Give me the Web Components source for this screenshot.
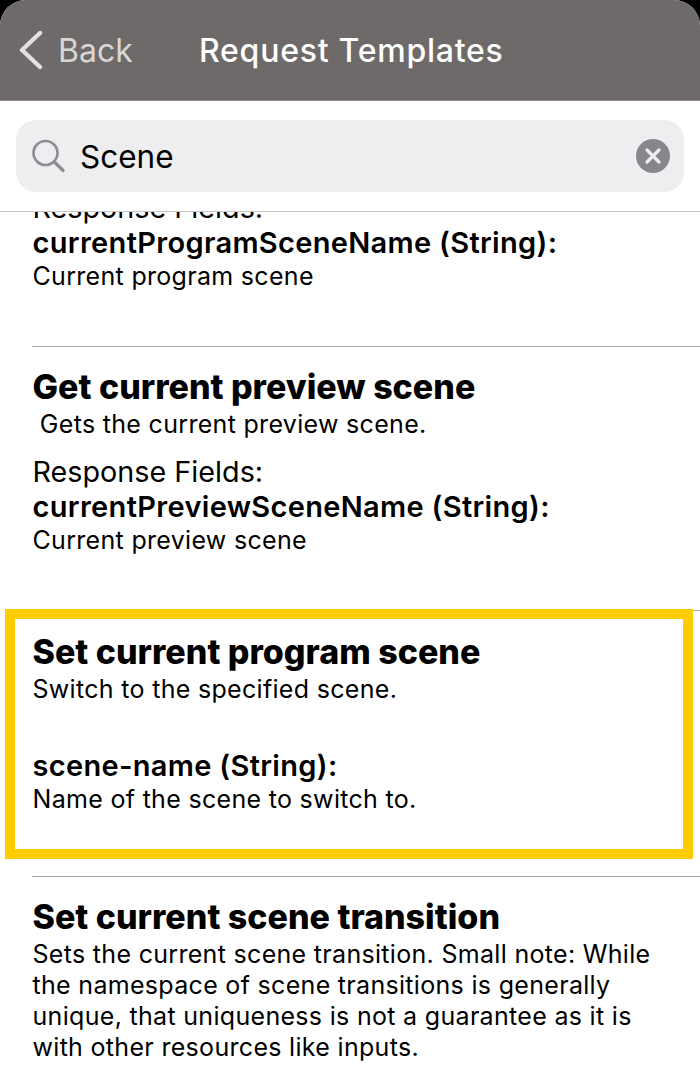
<!DOCTYPE html>
<html>
<head>
<meta charset="utf-8">
<title>Request Templates</title>
<style>
  html, body { margin: 0; padding: 0; background: #000; }
  body { width: 700px; height: 1079px; overflow: hidden; font-family: Inter, "Liberation Sans", sans-serif; }
</style>
</head>
<body>
<nav-screen>
  <nav-bar slot="bar" title="Request Templates" back="Back"></nav-bar>
  <search-field slot="search" value="Scene"></search-field>
</nav-screen>

<script>
class NavScreen extends HTMLElement {
  constructor() {
    super();
    const shadowRoot = this.attachShadow({mode: 'open'});
    shadowRoot.innerHTML = `
      <style>
        :host { display: flex; flex-direction: column; width: 700px; height: 1079px; background: #fff; border-radius: 26px 26px 0 0; overflow: hidden; position: relative; }
        #list { flex: 1 1 auto; overflow: hidden; border-top: 1px solid #c8c8cb; }
        #scroll { margin-top: -22px; }
      </style>
      <slot name="bar"></slot>
      <slot name="search"></slot>
      <div id="list"><div id="scroll"><slot></slot></div></div>
    `;
  }
}

class NavBar extends HTMLElement {
  constructor() {
    super();
    const shadowRoot = this.attachShadow({mode: 'open'});
    shadowRoot.innerHTML = `
      <style>
        :host { display: flex; align-items: center; height: 101px; box-sizing: border-box; background: #6e6a69; border-bottom: 1px solid #8e8b8a; flex: 0 0 auto; }
        svg { display: block; margin-left: 18px; flex: 0 0 auto; }
        #back { margin-left: 14px; width: 141px; font-size: 32px; color: #d9d7d5; }
        #title { font-size: 32px; font-weight: 500; color: #fff; letter-spacing: 0.75px; }
      </style>
      <svg width="26" height="40" viewBox="0 0 26 40"><path d="M22 3 L4 20 L22 37" fill="none" stroke="#e3e1df" stroke-width="4.4" stroke-linecap="round" stroke-linejoin="round"/></svg>
      <span id="back"></span>
      <span id="title"></span>
    `;
    shadowRoot.querySelector('#back').textContent = this.getAttribute('back');
    shadowRoot.querySelector('#title').textContent = this.getAttribute('title');
  }
}

class SearchField extends HTMLElement {
  constructor() {
    super();
    const shadowRoot = this.attachShadow({mode: 'open'});
    shadowRoot.innerHTML = `
      <style>
        :host { display: block; padding: 19px 16px 19px; background: #fff; flex: 0 0 auto; }
        #box { display: flex; align-items: center; height: 72px; background: #eeeef0; border-radius: 20px; padding: 0 14px 0 15px; }
        #value { flex: 1 1 auto; margin-left: 15px; font-size: 31.5px; color: #000; }
      </style>
      <div id="box">
        <svg width="34" height="34" viewBox="0 0 34 34"><circle cx="14.5" cy="14" r="12" fill="none" stroke="#8e8e92" stroke-width="2.6"/><path d="M23.5 23 L32 31.5" stroke="#8e8e92" stroke-width="3.2" stroke-linecap="round"/></svg>
        <span id="value"></span>
        <svg width="34" height="34" viewBox="0 0 34 34"><circle cx="17" cy="17" r="17" fill="#86868c"/><path d="M11 11 L23 23 M23 11 L11 23" stroke="#eeeef0" stroke-width="3.2" stroke-linecap="round"/></svg>
      </div>
    `;
    shadowRoot.querySelector('#value').textContent = this.getAttribute('value');
  }
}

class TemplateRow extends HTMLElement {
  constructor() {
    super();
    const shadowRoot = this.attachShadow({mode: 'open'});
    shadowRoot.innerHTML = `
      <style>
        :host { display: block; margin-left: 32px; border-bottom: 1px solid #a9a9ad; color: #000; height: var(--row-height, auto); box-sizing: border-box; }
        :host([plain]) { border-bottom: none; }
      </style>
      <slot></slot>
    `;
  }
}

class RowText extends HTMLElement {
  constructor() {
    super();
    const shadowRoot = this.attachShadow({mode: 'open'});
    shadowRoot.innerHTML = `
      <style>
        :host { display: block; margin-left: 0.5px; }
        div { white-space: pre; }
        :host([kind="title"]) { font-size: 34px; font-weight: 800; line-height: 40px; margin-bottom: 2px; letter-spacing: 0; }
        :host([kind="field"]) { font-size: 29px; font-weight: 600; line-height: 36px; letter-spacing: 0.32px; }
        :host([kind="label"]) { font-size: 28.75px; line-height: 35px; }
        :host([kind="body"]) { font-size: 25px; line-height: 31px; letter-spacing: 0.31px; }
      </style>
      <div><slot></slot></div>
    `;
  }
}

class HighlightBox extends HTMLElement {
  constructor() {
    super();
    const shadowRoot = this.attachShadow({mode: 'open'});
    shadowRoot.innerHTML = `
      <style>
        :host { display: block; position: absolute; left: 5px; top: 609px; width: 688px; height: 250px; box-sizing: border-box; border: 10px solid #ffcc00; pointer-events: none; }
      </style>
    `;
  }
}

customElements.define('nav-screen', NavScreen);
customElements.define('nav-bar', NavBar);
customElements.define('search-field', SearchField);
customElements.define('template-row', TemplateRow);
customElements.define('row-text', RowText);
customElements.define('highlight-box', HighlightBox);

// list content
const rows = [
  {h: 157, top: 0, lines: [['label', 'Response Fields:'], ['field', 'currentProgramSceneName (String):'], ['body', 'Current program scene']]},
  {h: 264, top: 20, lines: [['title', 'Get current preview scene'], ['body', ' Gets the current preview scene.'], ['gap', 14], ['label', 'Response Fields:'], ['field', 'currentPreviewSceneName (String):'], ['body', 'Current preview scene']]},
  {h: 266, top: 21, lines: [['title', 'Set current program scene'], ['body', 'Switch to the specified scene.'], ['gap', 43], ['field', 'scene-name (String):'], ['body', 'Name of the scene to switch to.']]},
  {h: 190, top: 20, plain: true, lines: [['title', 'Set current scene transition'], ['body', 'Sets the current scene transition. Small note: While'], ['body', 'the namespace of scene transitions is generally'], ['body', 'unique, that uniqueness is not a guarantee as it is'], ['body', 'with other resources like inputs.']]}
];
const screen = document.querySelector('nav-screen');
rows.forEach((r) => {
  const row = document.createElement('template-row');
  row.style.setProperty('--row-height', r.h + 'px');
  row.style.paddingTop = r.top + 'px';
  if(r.plain) row.setAttribute('plain', '');
  r.lines.forEach(([kind, text]) => {
    if(kind == 'gap') {
      const gap = document.createElement('div');
      gap.style.height = text + 'px';
      row.appendChild(gap);
      return;
    }
    const line = document.createElement('row-text');
    line.setAttribute('kind', kind);
    line.textContent = text;
    row.appendChild(line);
  });
  screen.appendChild(row);
});
screen.appendChild(document.createElement('highlight-box'));
</script>
</body>
</html>
